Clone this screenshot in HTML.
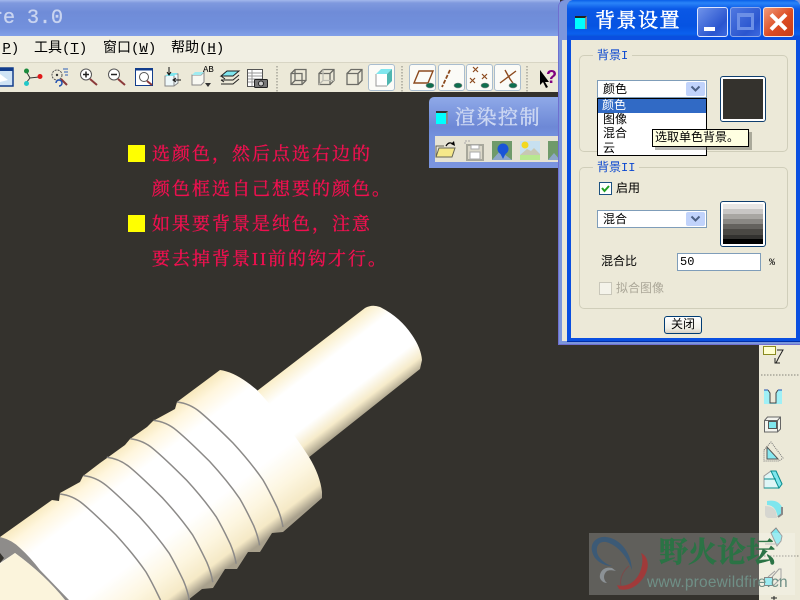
<!DOCTYPE html>
<html><head><meta charset="utf-8"><style>
html,body{margin:0;padding:0}
body{width:800px;height:600px;overflow:hidden;position:relative;background:#34322d;font-family:"Liberation Mono","WenQuanYi Zen Hei","Noto Sans CJK SC",monospace;font-size:12px;color:#000}
.a{position:absolute}
.t{position:absolute;white-space:nowrap;line-height:14px}
.red{position:absolute;left:152px;color:#f01050;font:18px/22px "Liberation Serif","Noto Serif CJK SC",serif;letter-spacing:2px;white-space:nowrap;-webkit-text-stroke:.35px #f01050}
.y{position:absolute;left:128px;width:17px;height:17px;background:#ffff00}
.btn{position:absolute;top:64px;width:27px;height:27px;background:#fbfbf7;border:1px solid #a9bdcf;border-radius:3px;box-sizing:border-box}
.grp{position:absolute;left:579px;width:209px;border:1px solid #d0ceba;border-radius:5px;box-sizing:border-box}
.leg{position:absolute;left:593px;background:#ece9d8;color:#0a47d0;padding:0 4px;line-height:13px;font-size:12px}
.cb{position:absolute;left:597px;width:110px;height:18px;background:#fff;border:1px solid #7f9db9;box-sizing:border-box;line-height:18px;padding-left:5px}
.cb i{position:absolute;right:1px;top:1px;width:19px;height:14px;background:#c1d3fb;border-radius:2px;display:block}
.well{position:absolute;left:720px;width:46px;height:46px;box-sizing:border-box;border:1px solid #0f3e6e;border-radius:3px;padding:2px;background:#fff}
.tb{position:absolute;border-radius:3px;box-sizing:border-box}
.m{font-size:14px;top:42px}
</style></head><body>

<!-- app title -->
<div class="a" style="left:0;top:0;width:560px;height:36px;background:linear-gradient(#a3b8ec 0,#7f99de 3px,#6f8cd8 12px,#7290dc 28px,#82a0e8 36px)"></div>
<div class="t" style="left:-9px;top:9px;font:20px/20px 'Liberation Mono',monospace;color:#c9d4f0;-webkit-text-stroke:.3px #c9d4f0">re 3.0</div>
<!-- menu -->
<div class="a" style="left:0;top:36px;width:560px;height:27px;background:#f1efe3;border-bottom:1px solid #d8d5c4;box-sizing:border-box"></div>
<div class="t m" style="left:-6px">(<u>P</u>)</div>
<div class="t m" style="left:34px">工具(<u>T</u>)</div>
<div class="t m" style="left:103px">窗口(<u>W</u>)</div>
<div class="t m" style="left:171px">帮助(<u>H</u>)</div>
<!-- toolbar -->
<div class="a" style="left:0;top:63px;width:560px;height:29px;background:#ece9d8"></div>

<div class="btn" style="left:368px"></div><div class="btn" style="left:409px"></div><div class="btn" style="left:438px"></div><div class="btn" style="left:466px"></div><div class="btn" style="left:494px"></div>

<svg class="a" style="left:0;top:60px" width="560" height="34" viewBox="0 60 560 34" fill="none">
 <rect x="-4" y="68" width="17" height="18" fill="#cfe3f5" stroke="#123d8c" stroke-width="1.500"/><rect x="-4" y="68" width="17" height="3" fill="#123d8c"/><path d="M0 74l8 6-8 2z" fill="#fff"/>
 <path d="M26 71l4 7 9-1M30 78l-4 5" stroke="#333"/><circle cx="26.500" cy="71" r="2.500" fill="#1c8a3c"/><circle cx="40" cy="76.500" r="2.500" fill="#e01818"/><circle cx="26.500" cy="83.500" r="2.500" fill="#22c8c8"/>
 <circle cx="57" cy="75" r="5" stroke="#555" stroke-dasharray="2 1"/><circle cx="57" cy="75" r="1.200" fill="#333"/><path d="M61 79l6 6" stroke="#8b3a3a" stroke-width="2"/><path d="M63 69h5M64 72h4M65 75h3" stroke="#2e60b8"/><path d="M56 83a3 3 0 1 1 3 3" stroke="#1f4fb0" stroke-width="1.500"/>
 <circle cx="86" cy="74.500" r="5.500" fill="#fff" stroke="#555"/><path d="M83 74.500h6M86 71.500v6" stroke="#222" stroke-width="1.500"/><path d="M90 79l7 6" stroke="#8b3a3a" stroke-width="2"/>
 <circle cx="114" cy="74.500" r="5.500" fill="#fff" stroke="#555"/><path d="M111 74.500h6" stroke="#222" stroke-width="1.500"/><path d="M118 79l7 6" stroke="#8b3a3a" stroke-width="2"/>
 <rect x="135.500" y="68.500" width="17" height="17" fill="#fff" stroke="#123d8c"/><rect x="135" y="68" width="18" height="2.500" fill="#123d8c"/><circle cx="144" cy="77" r="4.500" stroke="#555"/><path d="M147 81l5 4" stroke="#8b3a3a" stroke-width="2"/>
 <path d="M165 76l9-2 4 0 0 9-4 3-9 0z" fill="#eef8fa" stroke="#888"/><path d="M165 76l4-3h9l-4 3z" fill="#7fe6ee"/><path d="M174 76v10" stroke="#888"/><path d="M169 67v7M167 72l2 3 2-3M181 80h-7M176 78l-3 2 3 2" stroke="#111"/>
 <path d="M192 75h9l3-3v10l-3 3h-9z" fill="#f8f8f2" stroke="#888"/><path d="M192 75l3-3h9l-3 3z" fill="#9febf0"/><path d="M205 83l6 0-3 4z" fill="#333"/>
 <path d="M221 76l6-5h12l-6 5z" fill="#7fe6ee" stroke="#222"/><path d="M221 76l4 3M239 75l-6 5h-12M221 80l3 2M221 84h12l6-5" stroke="#222"/>
 <rect x="247.500" y="69.500" width="15" height="17" fill="#fff" stroke="#555"/><path d="M248 73h14M248 76h14M248 79h14M248 82h14M252 70v16" stroke="#999"/><rect x="254.500" y="79.500" width="13" height="8" rx="1" fill="#777" stroke="#222"/><circle cx="261" cy="83.500" r="2.500" fill="#ccc" stroke="#222"/>
 <path d="M277 66v26M402 66v26M527 66v26" stroke="#a7a699" stroke-dasharray="1.500 1.500" stroke-width="1.500"/>
 <g stroke="#6c6c66" stroke-width="1.300"><path d="M291 73.500h11v11h-11zM291 73.500l4-4h11v11l-4 4M295 69.500v11h11M291 84.500l4-4"/>
 <path d="M319 73.500h11v11h-11zM319 73.500l4-4h11v11l-4 4M330 73.500l4-4"/><path d="M323 69.500v11h11M319 84.500l4-4" stroke="#bcbcb2"/>
 <path d="M347 73.500h11v11h-11zM347 73.500l4-4h11v11l-4 4M358 73.500l4-4"/></g>
 <path d="M376 74h11v12h-11z" fill="#fff"/><path d="M376 74l5-5h11l-5 5z" fill="#7fe6ee"/><path d="M387 74l5-5v12l-5 5z" fill="#4fb6b0"/><path d="M376 74v12h11" stroke="#999"/>
 <g stroke="#8c4a1e" stroke-width="1.400"><path d="M414 83l5-12h14l-5 12z"/><path d="M450 70l-8 17" stroke-width="1.800" stroke-dasharray="4 1.500"/><path d="M473 67l5 5M478 67l-5 5M470 78l5 5M475 78l-5 5M482 74l5 5M487 74l-5 5" stroke-width="1.200"/><path d="M500 83l16-12M505 70l5 9 5 7"/></g>
 <g fill="#0e6e4e" stroke="#888" stroke-width=".6"><ellipse cx="430" cy="85.500" rx="4" ry="2.500"/><ellipse cx="458" cy="85.500" rx="4" ry="2.500"/><ellipse cx="485" cy="85.500" rx="4" ry="2.500"/><ellipse cx="513" cy="85.500" rx="4" ry="2.500"/></g>
 <path d="M540 70v15l3-3 3 6 2-1-3-5h4z" fill="#000"/>
</svg>
<div class="t" style="left:203px;top:66px;font:9px/9px 'Liberation Mono',monospace">AB</div>
<div class="t" style="left:546px;top:68px;font:bold 18px/18px 'Liberation Sans',sans-serif;color:#800080">?</div>

<!-- red text -->
<div class="y" style="top:145px"></div>
<div class="y" style="top:215px"></div>
<div class="red" style="top:143px">选颜色，然后点选右边的</div>
<div class="red" style="top:178px">颜色框选自己想要的颜色。</div>
<div class="red" style="top:213px">如果要背景是纯色，注意</div>
<div class="red" style="top:248px">要去掉背景II前的钩才行。</div>

<!-- 3D part -->
<svg class="a" style="left:0;top:300px" width="430" height="300" viewBox="0 0 430 300" fill="none">
<defs>
<linearGradient id="s" gradientUnits="userSpaceOnUse" x1="258" y1="90" x2="309" y2="157"><stop offset="0" stop-color="#faeec8"/><stop offset=".22" stop-color="#ffffff"/><stop offset=".68" stop-color="#ffffff"/><stop offset=".86" stop-color="#f6ebca"/><stop offset="1" stop-color="#a8a08a"/></linearGradient>
<linearGradient id="b" gradientUnits="userSpaceOnUse" x1="220" y1="70" x2="318" y2="200"><stop offset="0" stop-color="#f7e8bc"/><stop offset=".08" stop-color="#fff6de"/><stop offset=".2" stop-color="#ffffff"/><stop offset=".62" stop-color="#ffffff"/><stop offset=".8" stop-color="#fdf6e0"/><stop offset=".93" stop-color="#f5e9c6"/><stop offset="1" stop-color="#a8a08c"/></linearGradient>
<path id="g" d="M177 102C186 103 194 107 200 112C212 122 222 132 233 143C244 155 254 167 263 180C270 192 275 203 277 207C280 214 282 221 283 227"/>
</defs>
<path fill="url(#s)" d="M257 91L365 8Q372 4 380 7Q400 17 412 35Q421 48 422 60L420 69L308 158L250 130Z"/>
<path fill="url(#b)" d="M0 237L52 200L59 201L60 193L80 182L83 176L100 163L107 158L125 145L130 139L147 127L153 121L175 109L177 102L220 70Q236 72 257 90Q285 120 309 157Q320 175 322 192V198L283 232L272 233L260 252L248 252L237 269L225 269L213 288L202 289L188 300H0Z"/>
<g stroke="#8c8a88" stroke-width="1.500" fill="none">
<use href="#g"/>
<use href="#g" transform="translate(-23.400 18.400)"/>
<use href="#g" transform="translate(-46.800 36.800)"/>
<use href="#g" transform="translate(-70.200 55.200)"/>
<use href="#g" transform="translate(-93.600 73.600)"/>
<use href="#g" transform="translate(-117 92)"/>
</g>
<path fill="#8e8c8a" d="M0 237Q12 240 20 248Q30 257 40 270L69 300H65Q45 275 15 253L0 263Z"/>
<path fill="#34322d" d="M0 253L4 258L0 263Z"/>
<path fill="#fbf4dc" d="M0 264L15 253Q45 275 65 300H0Z"/>
</svg>

<!-- render control window -->
<div class="a" style="left:429px;top:97px;width:135px;height:71px;background:linear-gradient(#8fa9e8,#6d88d6 30px,#7390dc 39px,#7b95e0);border-radius:5px 0 0 0"></div>
<div class="a" style="left:435px;top:136px;width:130px;height:26px;background:#e6e3d4"></div>
<div class="a" style="left:436px;top:111px;width:12px;height:13px;background:#00ffff;border-top:2px solid #333;border-right:2px solid #8a8a8a;box-sizing:border-box"></div>
<div class="t" style="left:455px;top:106px;font:20px/24px 'Liberation Serif','Noto Serif CJK SC',serif;color:#ccd7f2;letter-spacing:1.500px;-webkit-text-stroke:.4px #ccd7f2">渲染控制</div>
<svg class="a" style="left:429px;top:136px" width="135" height="28" viewBox="429 136 135 28" fill="none">
 <path d="M436 157l3-9h16l-3 9z" fill="#f5e88a" stroke="#665"/><path d="M436 157v-11h8" stroke="#665"/><path d="M446 146q3-5 7-2" stroke="#000" stroke-width="1.300"/><path d="M455 146l-4-2 3-3z" fill="#000"/>
 <path d="M467 145h16v15h-16z" fill="#dcd9ca" stroke="#a8a89c" stroke-width="2"/><rect x="470" y="152" width="10" height="7" fill="#fff" stroke="#aaa"/><rect x="471" y="145" width="8" height="4" fill="#fff" stroke="#aaa"/><path d="M470 141h-5v4" stroke="#aaa" stroke-dasharray="2 1"/>
 <rect x="492" y="141" width="20" height="19" fill="#6f9a6a"/><path d="M492 160l8-9 12 9z" fill="#8da6c8"/><circle cx="503" cy="149" r="5.500" fill="#1a55d8"/><path d="M500 153l3 6 3-6z" fill="#1a55d8"/>
 <rect x="520" y="141" width="20" height="19" fill="#c7e0f0"/><circle cx="525" cy="145" r="3.500" fill="#f3d820"/><path d="M520 155l7-6 4 2 3-3 6 6v2h-20z" fill="#c8c8b4"/><rect x="520" y="155" width="20" height="5" fill="#b8e890"/>
 <rect x="548" y="141" width="12" height="19" fill="#6f9a6a"/><path d="M548 160l6-7 6 7z" fill="#8da6c8"/>
</svg>

<!-- right side toolbar -->
<div class="a" style="left:759px;top:345px;width:41px;height:255px;background:#ece9d8"></div>
<svg class="a" style="left:755px;top:340px" width="45" height="260" viewBox="755 340 45 260" fill="none">
 <rect x="763.500" y="346.500" width="12" height="8" fill="#ffffd0" stroke="#8a8a20"/><path d="M777 350h6l-4 7-3 6M775 358v5h5" stroke="#222"/>
 <path d="M761 375h39" stroke="#a7a699" stroke-dasharray="1.500 1.500" stroke-width="1.500"/>
 <rect x="764" y="390" width="18" height="14" fill="#9ff0f6"/><path d="M768 390l2 3v10h6v-10l2-3z" fill="#ece9d8"/><path d="M768 390l2 3v10h6v-10l2-3" stroke="#444"/><path d="M764 390h4M778 390h4" stroke="#1f4fb0"/>
 <path d="M764.500 420.500l3-3.500h13v12l-3 3h-13z" fill="#f4f4ee" stroke="#666"/><path d="M764.500 420.500h13v11.500M777.500 420.500l3-3.500" stroke="#666"/><rect x="768.500" y="421.500" width="8" height="7" fill="#7fe6ee" stroke="#555"/>
 <path d="M764 450l7-8 12 16-4 3h-15z" fill="#ece9d8" stroke="#777" stroke-dasharray="1 1"/><path d="M767 459v-12l11 12z" fill="#86e8f0" stroke="#555"/>
 <path d="M764 476l7-5h5l6 13-3 4h-15z" fill="#dff6f6" stroke="#999"/><path d="M771 471l5 0 6 13-3 4z" fill="#7fe6ee" stroke="#0a9090"/><path d="M764 488h15M764 479h12" stroke="#0a9090"/>
 <path d="M767 501q11-2 15 6v7l-4 3-2-6q-3-6-9-6z" fill="#7fe6ee"/><path d="M765 506q9 0 11 6l1 6h-9q-3-1-3-4z" fill="#d6d6d0"/><path d="M782 507v7l-4 3" stroke="#888" stroke-width="2"/>
 <path d="M771 533l5-5 6 8-1 5-4 5z" fill="#7fe6ee" stroke="#888"/><path d="M765 544h13" stroke="#aaa"/>
 <path d="M761 556h39" stroke="#a7a699" stroke-dasharray="1.500 1.500" stroke-width="1.500"/>
 <rect x="764.500" y="577.500" width="8" height="8" fill="#7fe6ee" stroke="#666"/><path d="M772 577l7-8h2v9l-8 8M768 577l7-6" stroke="#888"/><path d="M774 596v4M771 598h6" stroke="#222"/>
</svg>

<!-- watermark -->
<div class="a" style="left:589px;top:533px;width:206px;height:62px;background:rgba(255,255,255,.22)"></div>
<svg class="a" style="left:589px;top:533px" width="70" height="67" viewBox="589 533 70 67" fill="none">
 <path d="M592 551C590 542 598 536 606 537C618 538 631 550 632 570C628 558 618 545 606 542C599 541 596 546 597 552C598 558 605 564 612 566C604 566 594 561 592 551Z" fill="#3c5a76"/>
 <path d="M641 553C648 556 650 566 645 575C639 586 628 592 619 589L617 585C626 588 636 582 640 572C643 564 643 558 641 553Z" fill="#a03a3a"/>
 <path d="M629 566C624 570 619 578 621 586" stroke="#7a4a4a" stroke-width="1"/>
 <path d="M612 568C604 566 599 572 600 578C601 581 604 583 607 583C603 580 603 574 607 571C609 570 612 570 616 571Z" fill="#8b9195"/>
</svg>
<div class="t" style="left:659px;top:536px;font:bold 29px/34px 'Liberation Serif','Noto Serif CJK SC',serif;color:#2b7345;-webkit-text-stroke:.5px #2b7345">野火论坛</div>
<div class="t" style="left:647px;top:574px;font:15.500px/18px 'Liberation Sans',sans-serif;color:#6f8f86;letter-spacing:.2px">www.proewildfire.cn</div>

<!-- behind dialog -->
<div class="a" style="left:558px;top:0;width:242px;height:345px;background:#6f6fd0;border-radius:7px 0 0 0"></div>
<div class="a" style="left:559px;top:0;width:241px;height:344px;background:#7b96dc;border-radius:7px 0 0 0"></div>
<div class="a" style="left:562px;top:40px;width:6px;height:301px;background:#ece9d8"></div>
<!-- dialog frame -->
<div class="a" style="left:567px;top:0;width:233px;height:342px;background:#0a4fe0;border-radius:7px 7px 0 0;border-bottom:1px solid #002fa8;box-sizing:border-box"></div>
<div class="a" style="left:567px;top:0;width:233px;height:36px;background:linear-gradient(#0a5fe8,#2a84f8 3px,#0a58e6 9px,#0653e2 26px,#0a60ee 34px,#0a55dc);border-radius:7px 7px 0 0"></div>
<div class="a" style="left:571px;top:40px;width:225px;height:298px;background:#ece9d8"></div>
<div class="a" style="left:575px;top:16px;width:12px;height:13px;background:#00ffff;border-top:2px solid #222;border-right:2px solid #8a8a8a;box-sizing:border-box"></div>
<div class="t" style="left:595px;top:9px;font:20px/24px 'Liberation Serif','Noto Serif CJK SC',serif;color:#fff;letter-spacing:1.500px;-webkit-text-stroke:.5px #fff">背景设置</div>
<!-- title buttons -->
<div class="tb" style="left:697px;top:7px;width:31px;height:30px;background:linear-gradient(135deg,#6f93ea,#2a55cf 70%,#3c6ae0);border:1px solid #dde6ff"></div>
<div class="a" style="left:704px;top:27px;width:11px;height:4px;background:#fff"></div>
<div class="tb" style="left:730px;top:7px;width:31px;height:30px;background:linear-gradient(135deg,#4f78e0,#2a55cf 70%,#3c6ae0);border:1px solid #8aa6ea"></div>
<div class="a" style="left:737px;top:13px;width:17px;height:17px;box-sizing:border-box;border:3px solid #6c8fe6;border-top-width:4px"></div>
<div class="tb" style="left:763px;top:7px;width:31px;height:30px;background:linear-gradient(135deg,#f09a78,#dc4b22 55%,#c63c18);border:1px solid #f6e6e0"></div>
<svg class="a" style="left:763px;top:7px" width="31" height="30" fill="none"><path d="M8 7.500L23 22.500M23 7.500L8 22.500" stroke="#fff" stroke-width="4"/></svg>

<!-- groups -->
<div class="grp" style="top:55px;height:97px"></div>
<div class="leg" style="top:50px">背景I</div>
<div class="grp" style="top:167px;height:142px"></div>
<div class="leg" style="top:162px">背景II</div>

<div class="cb" style="top:80px">颜色<i></i></div>
<svg class="a" style="left:686px;top:81px" width="20" height="16" fill="none"><path d="M5.500 5.500l4 4 4-4" stroke="#4d6185" stroke-width="2"/></svg>
<div class="well" style="top:76px"><div style="width:100%;height:100%;background:#34322d"></div></div>

<div class="a" style="left:597px;top:98px;width:110px;height:58px;background:#fff;border:1px solid #000;box-sizing:border-box"></div>
<div class="a" style="left:598px;top:99px;width:108px;height:14px;background:#316ac5"></div>
<div class="t" style="left:602px;top:99px;color:#fff">颜色</div>
<div class="t" style="left:603px;top:113px">图像</div>
<div class="t" style="left:603px;top:127px">混合</div>
<div class="t" style="left:603px;top:142px">云</div>
<div class="a" style="left:652px;top:129px;width:97px;height:18px;background:#ffffe1;border:1px solid #000;box-sizing:border-box;box-shadow:3px 3px 0 rgba(90,90,80,.45);line-height:17px;padding-left:2px;white-space:nowrap">选取单色背景。</div>

<div class="a" style="left:599px;top:182px;width:13px;height:13px;background:#fff;border:1px solid #1c5180;box-sizing:border-box"></div>
<svg class="a" style="left:599px;top:182px" width="13" height="13" fill="none"><path d="M3 6l2.500 3L10 4" stroke="#21a121" stroke-width="2"/></svg>
<div class="t" style="left:616px;top:182px">启用</div>
<div class="cb" style="top:210px">混合<i></i></div>
<svg class="a" style="left:686px;top:211px" width="20" height="16" fill="none"><path d="M5.500 5.500l4 4 4-4" stroke="#4d6185" stroke-width="2"/></svg>
<div class="well" style="top:201px"><div style="width:100%;height:100%;background:linear-gradient(#e8e6e4 0 12%,#c8c6c4 12% 25%,#a8a6a2 25% 38%,#8a8884 38% 50%,#64625e 50% 62%,#4a4844 62% 78%,#333230 78% 88%,#000 88%)"></div></div>
<div class="t" style="left:601px;top:255px">混合比</div>
<div class="a" style="left:677px;top:253px;width:84px;height:18px;background:#fff;border:1px solid #7f9db9;box-sizing:border-box;line-height:17px;padding-left:2px">50</div>
<div class="t" style="left:769px;top:257px;font-size:10px">%</div>
<div class="a" style="left:599px;top:282px;width:13px;height:13px;background:#f4f3ea;border:1px solid #c9c7ba;box-sizing:border-box"></div>
<div class="t" style="left:616px;top:282px;color:#aca899">拟合图像</div>
<div class="a" style="left:664px;top:316px;width:38px;height:18px;background:linear-gradient(#fff,#f0efe6 70%,#d6d0c5);border:1px solid #003c74;border-radius:3px;box-sizing:border-box;text-align:center;line-height:16px">关闭</div>
</body></html>
